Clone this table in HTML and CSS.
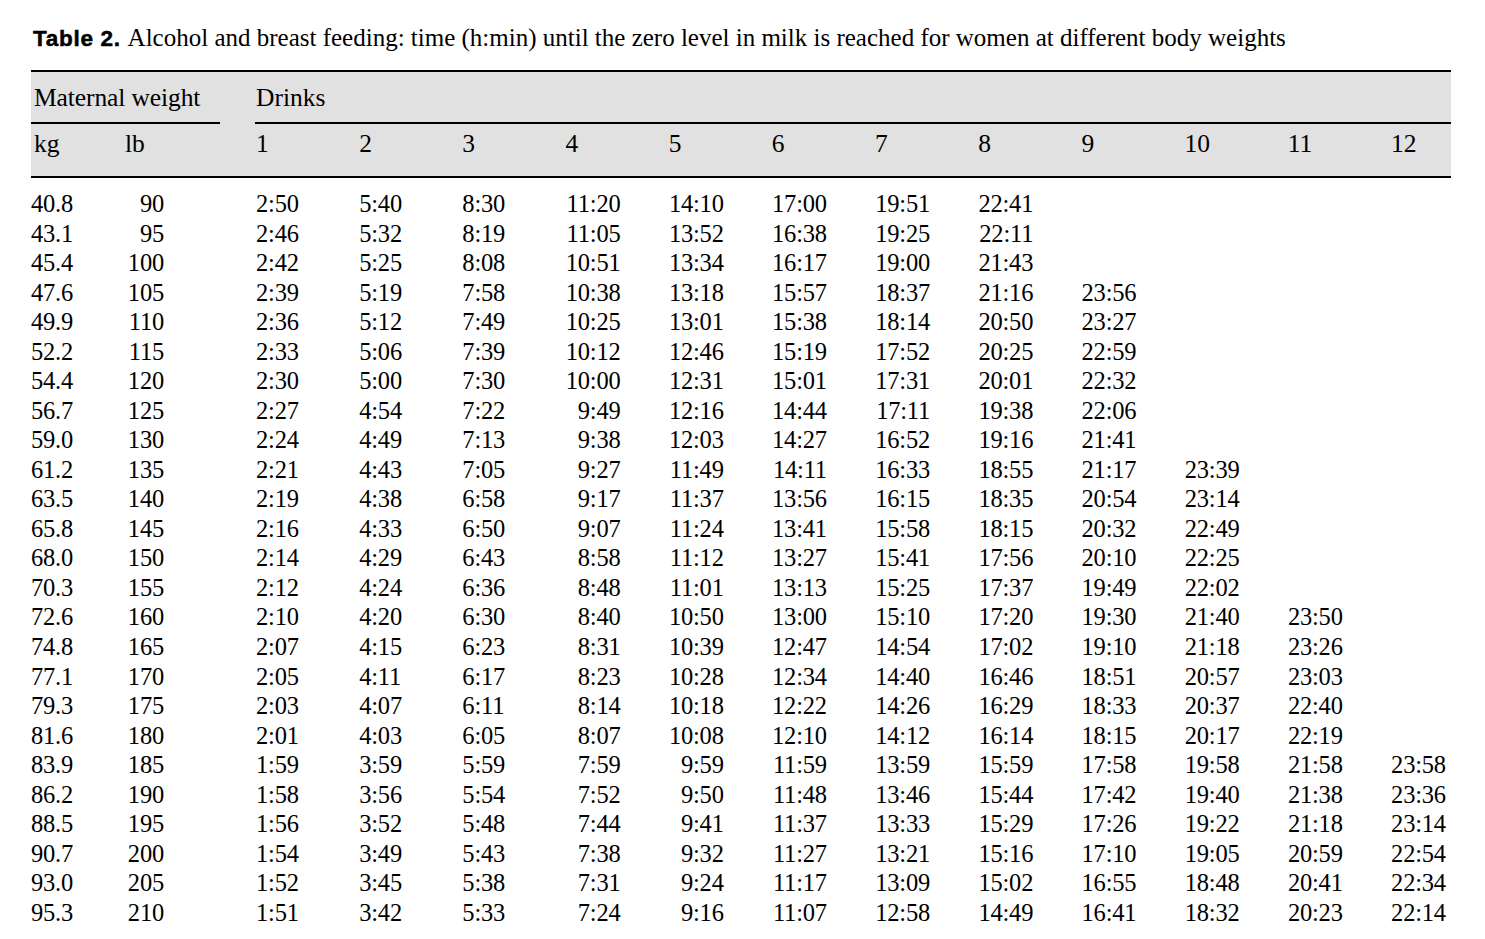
FILE: index.html
```html
<!DOCTYPE html>
<html>
<head>
<meta charset="utf-8">
<link rel="stylesheet" href="styles.css">
</head>
<body>
<div class="page">
  <p class="caption"><span class="label">Table 2.</span> Alcohol and breast feeding: time (h:min) until the zero level in milk is reached for women at different body weights</p>
  <div class="head">
    <div class="group-row">
      <div class="group group-weight">Maternal weight</div>
      <div class="group group-drinks">Drinks</div>
    </div>
    <div class="grid col-row">
      <div class="c">kg</div><div class="c">lb</div>
      <div class="c">1</div><div class="c">2</div><div class="c">3</div><div class="c">4</div><div class="c">5</div><div class="c">6</div><div class="c">7</div><div class="c">8</div><div class="c">9</div><div class="c">10</div><div class="c">11</div><div class="c">12</div>
    </div>
  </div>
  <div class="body" id="body"></div>
</div>
<script src="app.js"></script>
</body>
</html>
```
FILE: app.js
```js
var rows = [
["40.8","90","2:50","5:40","8:30","11:20","14:10","17:00","19:51","22:41"],
["43.1","95","2:46","5:32","8:19","11:05","13:52","16:38","19:25","22:11"],
["45.4","100","2:42","5:25","8:08","10:51","13:34","16:17","19:00","21:43"],
["47.6","105","2:39","5:19","7:58","10:38","13:18","15:57","18:37","21:16","23:56"],
["49.9","110","2:36","5:12","7:49","10:25","13:01","15:38","18:14","20:50","23:27"],
["52.2","115","2:33","5:06","7:39","10:12","12:46","15:19","17:52","20:25","22:59"],
["54.4","120","2:30","5:00","7:30","10:00","12:31","15:01","17:31","20:01","22:32"],
["56.7","125","2:27","4:54","7:22","9:49","12:16","14:44","17:11","19:38","22:06"],
["59.0","130","2:24","4:49","7:13","9:38","12:03","14:27","16:52","19:16","21:41"],
["61.2","135","2:21","4:43","7:05","9:27","11:49","14:11","16:33","18:55","21:17","23:39"],
["63.5","140","2:19","4:38","6:58","9:17","11:37","13:56","16:15","18:35","20:54","23:14"],
["65.8","145","2:16","4:33","6:50","9:07","11:24","13:41","15:58","18:15","20:32","22:49"],
["68.0","150","2:14","4:29","6:43","8:58","11:12","13:27","15:41","17:56","20:10","22:25"],
["70.3","155","2:12","4:24","6:36","8:48","11:01","13:13","15:25","17:37","19:49","22:02"],
["72.6","160","2:10","4:20","6:30","8:40","10:50","13:00","15:10","17:20","19:30","21:40","23:50"],
["74.8","165","2:07","4:15","6:23","8:31","10:39","12:47","14:54","17:02","19:10","21:18","23:26"],
["77.1","170","2:05","4:11","6:17","8:23","10:28","12:34","14:40","16:46","18:51","20:57","23:03"],
["79.3","175","2:03","4:07","6:11","8:14","10:18","12:22","14:26","16:29","18:33","20:37","22:40"],
["81.6","180","2:01","4:03","6:05","8:07","10:08","12:10","14:12","16:14","18:15","20:17","22:19"],
["83.9","185","1:59","3:59","5:59","7:59","9:59","11:59","13:59","15:59","17:58","19:58","21:58","23:58"],
["86.2","190","1:58","3:56","5:54","7:52","9:50","11:48","13:46","15:44","17:42","19:40","21:38","23:36"],
["88.5","195","1:56","3:52","5:48","7:44","9:41","11:37","13:33","15:29","17:26","19:22","21:18","23:14"],
["90.7","200","1:54","3:49","5:43","7:38","9:32","11:27","13:21","15:16","17:10","19:05","20:59","22:54"],
["93.0","205","1:52","3:45","5:38","7:31","9:24","11:17","13:09","15:02","16:55","18:48","20:41","22:34"],
["95.3","210","1:51","3:42","5:33","7:24","9:16","11:07","12:58","14:49","16:41","18:32","20:23","22:14"]
];
var body = document.getElementById("body");
rows.forEach(function (r) {
  var row = document.createElement("div");
  row.className = "grid data-row";
  for (var i = 0; i < 14; i++) {
    var cell = document.createElement("div");
    if (i === 0) cell.className = "c kg";
    else if (i === 1) cell.className = "c lb";
    else cell.className = i <= 4 ? "c t narrow" : "c t";
    var span = document.createElement("span");
    span.className = "v";
    span.textContent = r[i] || "";
    cell.appendChild(span);
    row.appendChild(cell);
  }
  body.appendChild(row);
});
```
FILE: styles.css
```css
html, body {
  margin: 0;
  padding: 0;
  background: #ffffff;
}
.page {
  width: 1420px;
  padding: 0 0 0 31px;
  font-family: "Liberation Serif", "Times New Roman", serif;
  color: #000;
}
.caption {
  margin: 0;
  padding-top: 25px;
  height: 48px;
  box-sizing: border-box;
  font-size: 25px;
  line-height: 26px;
  white-space: nowrap;
}
.label {
  font-family: "Liberation Sans", Arial, sans-serif;
  font-weight: bold;
  font-size: 22.5px;
  letter-spacing: 0.7px;
  -webkit-text-stroke: 0.5px #000;
  margin-left: 2px;
  margin-right: 2px;
}
.head {
  margin-top: 22px;
  border-top: 2px solid #000;
  border-bottom: 2px solid #000;
  background: #e1e1e1;
  font-size: 25.5px;
}
.group-row {
  display: flex;
  height: 52px;
}
.group {
  border-bottom: 2px solid #000;
  line-height: 52px;
  box-sizing: border-box;
}
.group-weight {
  width: 189px;
  padding-left: 3px;
  letter-spacing: -0.1px;
}
.group-drinks {
  margin-left: 35px;
  flex: 1;
  padding-left: 1px;
}
.grid {
  display: grid;
  grid-template-columns: 94px 131px repeat(11, 103.18px) 1fr;
}
.col-row {
  height: 52px;
  line-height: 40px;
}
.col-row .c:first-child {
  padding-left: 3px;
}
.body {
  padding-top: 11px;
  font-size: 24.5px;
  letter-spacing: -0.2px;
}
.data-row {
  height: 29.54px;
  line-height: 29.54px;
}
.lb {
  text-align: right;
  padding-right: 92px;
}
.t .v {
  display: inline-block;
  width: 55px;
  text-align: right;
}
.narrow .v {
  width: auto;
}
```
